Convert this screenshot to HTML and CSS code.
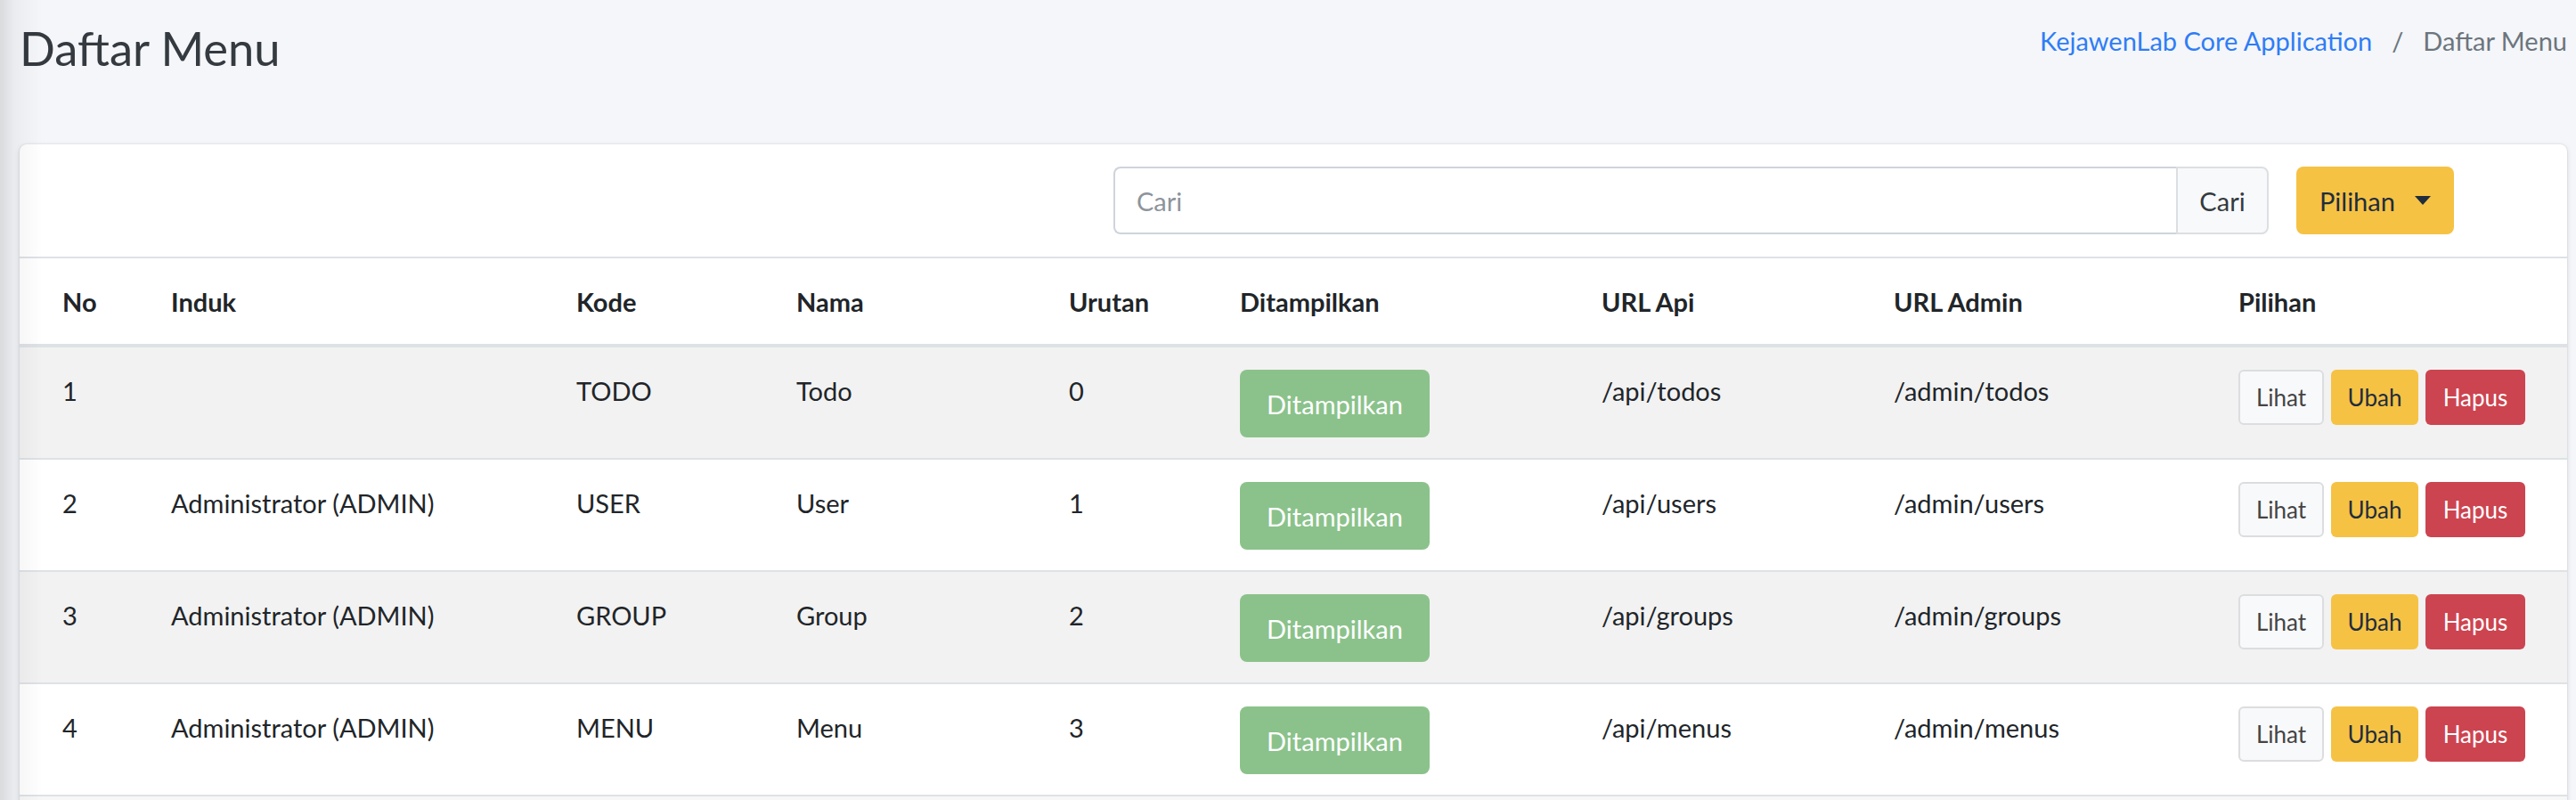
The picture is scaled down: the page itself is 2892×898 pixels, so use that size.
FILE: index.html
```html
<!DOCTYPE html>
<html lang="id">
<head>
<meta charset="utf-8">
<title>Daftar Menu</title>
<link rel="stylesheet" href="styles.css">
</head>
<body>
<div class="side-shadow"></div>
<div class="wrapper">
  <div class="content-header">
    <h1 class="page-title">Daftar Menu</h1>
    <ol class="breadcrumb">
      <li class="crumb"><a class="crumb-link" href="#">KejawenLab Core Application</a></li>
      <li class="crumb sep">/</li>
      <li class="crumb active">Daftar Menu</li>
    </ol>
  </div>

  <div class="card">
    <div class="card-header">
      <div class="search-group">
        <input class="search-input" type="text" placeholder="Cari">
        <button class="search-btn">Cari</button>
      </div>
      <button class="options-btn">Pilihan <span class="caret"></span></button>
    </div>

    <table class="data-table">
      <colgroup>
        <col class="c-no"><col class="c-induk"><col class="c-kode"><col class="c-nama"><col class="c-urutan"><col class="c-tampil"><col class="c-api"><col class="c-admin"><col class="c-aksi">
      </colgroup>
      <thead>
        <tr>
          <th>No</th><th>Induk</th><th>Kode</th><th>Nama</th><th>Urutan</th><th>Ditampilkan</th><th>URL Api</th><th>URL Admin</th><th>Pilihan</th>
        </tr>
      </thead>
      <tbody>
        <tr>
          <td>1</td><td></td><td>TODO</td><td>Todo</td><td>0</td>
          <td><span class="badge-btn">Ditampilkan</span></td>
          <td>/api/todos</td><td>/admin/todos</td>
          <td class="actions"><button class="btn-sm view">Lihat</button><button class="btn-sm edit">Ubah</button><button class="btn-sm del">Hapus</button></td>
        </tr>
        <tr>
          <td>2</td><td>Administrator (ADMIN)</td><td>USER</td><td>User</td><td>1</td>
          <td><span class="badge-btn">Ditampilkan</span></td>
          <td>/api/users</td><td>/admin/users</td>
          <td class="actions"><button class="btn-sm view">Lihat</button><button class="btn-sm edit">Ubah</button><button class="btn-sm del">Hapus</button></td>
        </tr>
        <tr>
          <td>3</td><td>Administrator (ADMIN)</td><td>GROUP</td><td>Group</td><td>2</td>
          <td><span class="badge-btn">Ditampilkan</span></td>
          <td>/api/groups</td><td>/admin/groups</td>
          <td class="actions"><button class="btn-sm view">Lihat</button><button class="btn-sm edit">Ubah</button><button class="btn-sm del">Hapus</button></td>
        </tr>
        <tr>
          <td>4</td><td>Administrator (ADMIN)</td><td>MENU</td><td>Menu</td><td>3</td>
          <td><span class="badge-btn">Ditampilkan</span></td>
          <td>/api/menus</td><td>/admin/menus</td>
          <td class="actions"><button class="btn-sm view">Lihat</button><button class="btn-sm edit">Ubah</button><button class="btn-sm del">Hapus</button></td>
        </tr>
      </tbody>
    </table>
    <div class="card-footer"></div>
  </div>
</div>
</body>
</html>
```

FILE: styles.css
```css
* { box-sizing: border-box; }

html, body {
  margin: 0;
  padding: 0;
}

body {
  background: #f4f6f9;
  font-family: Lato, "Noto Sans", sans-serif;
  font-size: 29px;
  line-height: 48px;
  color: #212529;
  overflow: hidden;
}

.side-shadow {
  position: fixed;
  top: 0;
  left: 0;
  width: 48px;
  height: 100%;
  background: linear-gradient(to right, rgba(0,0,0,0.11), rgba(0,0,0,0.04) 16px, rgba(0,0,0,0));
  pointer-events: none;
  z-index: 10;
}

.wrapper {
  padding: 0 10px 0 22px;
}

.content-header {
  display: flex;
  justify-content: space-between;
  align-items: flex-start;
  height: 162px;
}

.page-title {
  margin: 0;
  padding-top: 19px;
  font-size: 52.5px;
  font-weight: 400;
  line-height: 69px;
  color: #343a40;
}

.breadcrumb {
  display: flex;
  list-style: none;
  margin: 0;
  padding: 22px 0 0 0;
  font-size: 29px;
  line-height: 48px;
}

.crumb-link {
  color: #2f7df6;
  text-decoration: none;
}

.sep {
  color: #6c757d;
  padding: 0 22px;
}

.active {
  color: #6c757d;
}

.card {
  background: #fff;
  border-radius: 8px;
  box-shadow: 0 0 2px rgba(0,0,0,0.14), 0 2px 6px rgba(0,0,0,0.12);
  overflow: hidden;
}

.card-header {
  display: flex;
  justify-content: flex-end;
  align-items: center;
  gap: 31px;
  padding: 25px 127px 25px 40px;
  border-bottom: 2px solid #dee2e6;
}

.search-group {
  display: flex;
  height: 76px;
}

.search-input {
  width: 1193px;
  height: 76px;
  border: 2px solid #ced4da;
  border-right: 0;
  border-radius: 8px 0 0 8px;
  padding: 0 24px;
  font-family: inherit;
  font-size: 29px;
  color: #495057;
  outline: none;
}

.search-input::placeholder {
  color: #8d949b;
}

.search-btn {
  width: 104px;
  height: 76px;
  border: 2px solid #dcdfe2;
  border-radius: 0 8px 8px 0;
  background: #f8f9fa;
  font-family: inherit;
  font-size: 29px;
  color: #343a40;
  padding: 0;
}

.options-btn {
  display: flex;
  align-items: center;
  gap: 22px;
  height: 76px;
  width: 177px;
  padding: 0 0 0 26px;
  border: 0;
  border-radius: 8px;
  background: #f6c244;
  color: #1f2d3d;
  font-family: inherit;
  font-size: 29px;
}

.caret {
  display: inline-block;
  width: 0;
  height: 0;
  border-left: 9px solid transparent;
  border-right: 9px solid transparent;
  border-top: 10px solid #1f2d3d;
}

.data-table {
  width: 100%;
  border-collapse: collapse;
  table-layout: fixed;
}

.c-no { width: 146px; }
.c-induk { width: 455px; }
.c-kode { width: 247px; }
.c-nama { width: 306px; }
.c-urutan { width: 192px; }
.c-tampil { width: 406px; }
.c-api { width: 328px; }
.c-admin { width: 387px; }
.c-aksi { width: 393px; }

.data-table th,
.data-table td {
  padding: 25px 24px 23px;
  text-align: left;
  vertical-align: top;
  white-space: nowrap;
}

.data-table th:first-child,
.data-table td:first-child {
  padding-left: 48px;
}

.data-table th {
  font-weight: 700;
  border-bottom: 4px solid #dee2e6;
}

.data-table td {
  border-top: 2px solid #dee2e6;
}

.data-table tbody tr:first-child td {
  border-top: 0;
}

.data-table tbody tr:nth-child(odd) {
  background: #f2f2f2;
}

.badge-btn {
  display: inline-block;
  width: 213px;
  height: 76px;
  padding: 12px 0;
  text-align: center;
  border-radius: 8px;
  background: #8bc28b;
  color: #fff;
  line-height: 54px;
  font-size: 29px;
}

.btn-sm {
  height: 62px;
  padding: 0 16px;
  margin-right: 8px;
  border-radius: 6px;
  font-family: inherit;
  font-size: 26px;
  border: 2px solid transparent;
  vertical-align: top;
}

.view {
  background: #f8f9fa;
  border-color: #dcdddf;
  color: #444;
  width: 96px;
}

.edit {
  background: #f6c244;
  color: #1f2d3d;
  width: 98px;
}

.del {
  background: #cc4450;
  color: #fff;
  width: 112px;
}

.card-footer {
  height: 40px;
  border-top: 2px solid #dee2e6;
  background: #f7f7f7;
}
```
